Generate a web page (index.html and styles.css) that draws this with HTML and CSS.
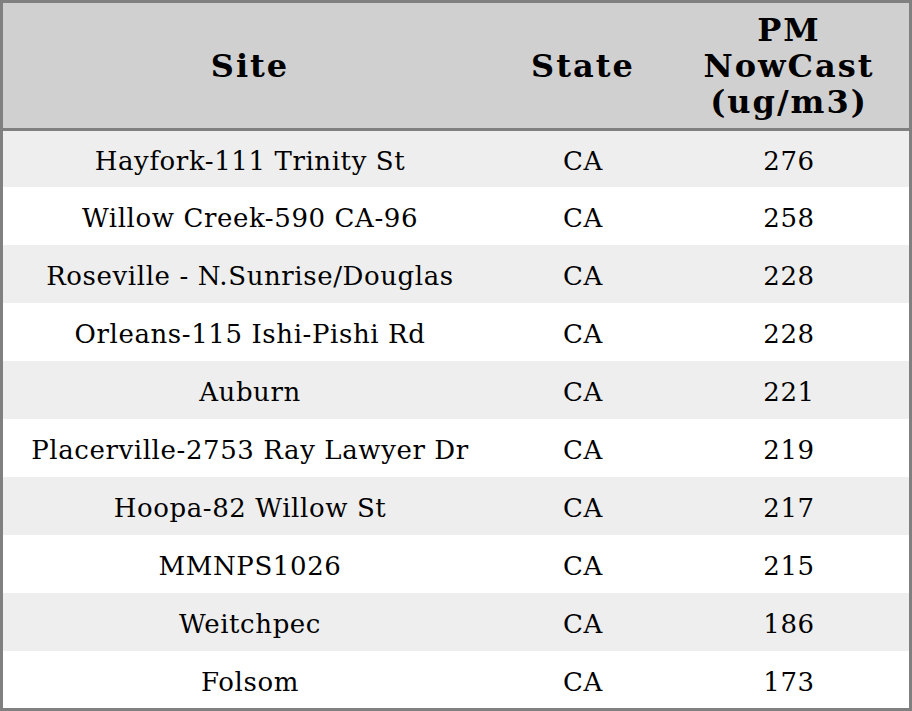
FILE: index.html
```html
<!DOCTYPE html>
<html>
<head>
<meta charset="utf-8">
<link rel="stylesheet" href="styles.css">
</head>
<body>
<table class="aq">
  <colgroup><col class="c-site"><col class="c-state"><col class="c-pm"></colgroup>
  <thead>
    <tr class="head"><th>Site</th><th>State</th><th>PM<br>NowCast<br>(ug/m3)</th></tr>
  </thead>
  <tbody>
    <tr class="odd first"><td>Hayfork-111 Trinity St</td><td>CA</td><td>276</td></tr>
    <tr class="even"><td>Willow Creek-590 CA-96</td><td>CA</td><td>258</td></tr>
    <tr class="odd"><td>Roseville - N.Sunrise/Douglas</td><td>CA</td><td>228</td></tr>
    <tr class="even"><td>Orleans-115 Ishi-Pishi Rd</td><td>CA</td><td>228</td></tr>
    <tr class="odd"><td>Auburn</td><td>CA</td><td>221</td></tr>
    <tr class="even"><td>Placerville-2753 Ray Lawyer Dr</td><td>CA</td><td>219</td></tr>
    <tr class="odd"><td>Hoopa-82 Willow St</td><td>CA</td><td>217</td></tr>
    <tr class="even"><td>MMNPS1026</td><td>CA</td><td>215</td></tr>
    <tr class="odd"><td>Weitchpec</td><td>CA</td><td>186</td></tr>
    <tr class="even last"><td>Folsom</td><td>CA</td><td>173</td></tr>
  </tbody>
</table>
</body>
</html>
```
FILE: styles.css
```css
html, body { margin: 0; padding: 0; background: #ffffff; }
.aq {
  width: 912px;
  height: 711px;
  border-collapse: separate;
  border-spacing: 0;
  border: 3px solid #808080;
  box-sizing: border-box;
  font-family: "DejaVu Serif", serif;
  color: #000;
  table-layout: fixed;
}
.c-site { width: 494px; }
.c-state { width: 172px; }
.c-pm { width: 240px; }
.aq th, .aq td { padding: 0; text-align: center; vertical-align: middle; }
.head th {
  height: 125px;
  background: #d0d0d0;
  font-size: 32px;
  letter-spacing: 2px;
  font-weight: bold;
  border-bottom: 3px solid #808080;
  line-height: 36px;
}
.aq td {
  font-size: 26px;
  letter-spacing: 0.6px;
  height: 58px;
  box-sizing: border-box;
  padding-top: 4px;
}
.first td { height: 56px; }
.last td { height: 57px; }
.odd td { background: #eeeeee; }
.even td { background: #ffffff; }
```
